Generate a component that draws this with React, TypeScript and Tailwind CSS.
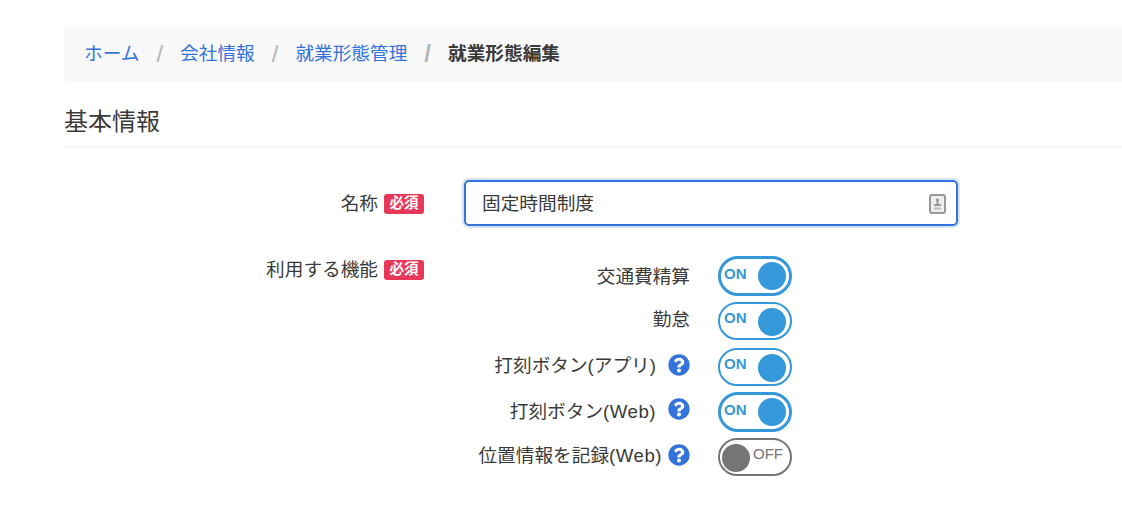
import { FaQuestionCircle } from "react-icons/fa";

const features = [
  { label: "交通費精算", latin: "", on: true, thick: true, help: false },
  { label: "勤怠", latin: "", on: true, thick: false, help: false },
  { label: "打刻ボタン(アプリ)", latin: "", on: true, thick: false, help: true },
  { label: "打刻ボタン", latin: "(Web)", on: true, thick: true, help: true },
  { label: "位置情報を記録", latin: "(Web)", on: false, thick: false, help: true },
];

function Required() {
  return (
    <span className="ml-[6px] flex h-5 w-10 items-center justify-center rounded-[3px] bg-[#e8385a] text-[14.5px] font-bold text-white">
      必須
    </span>
  );
}

function Slash({ bold }: { bold?: boolean }) {
  return <span className={`mx-[17px] text-2xl text-[#b5b5b5] ${bold ? "font-bold" : ""}`}>/</span>;
}

function Toggle({ on, thick }: { on: boolean; thick: boolean }) {
  if (!on) {
    return (
      <div className="relative h-[38px] w-[74px] rounded-full border-2 border-[#757575] bg-white">
        <span className="absolute left-[2px] top-[4px] h-7 w-7 rounded-full bg-[#757575]" />
        <span className="absolute left-[33px] top-[4px] text-[15px] leading-5 text-[#757575]">OFF</span>
      </div>
    );
  }
  return (
    <div className={`relative w-[74px] rounded-full bg-white border-[#3498db] ${thick ? "h-10 border-[3px]" : "h-[38px] border-2"}`}>
      <span className={`absolute h-7 w-7 rounded-full bg-[#3498db] ${thick ? "right-[3px] top-[3px]" : "right-[4px] top-[4px]"}`} />
      <span className={`absolute text-[15px] font-bold leading-5 text-[#3498db] ${thick ? "left-[3px] top-[5px]" : "left-[4px] top-[4px]"}`}>ON</span>
    </div>
  );
}

export default function App() {
  return (
    <div className="h-[516px] overflow-hidden bg-white pl-16 pt-[26px] font-['Liberation_Sans','Noto_Sans_CJK_JP',sans-serif] text-[18.67px] text-[#3a3a3a]">
      {/* Breadcrumb */}
      <nav className="flex h-14 items-center rounded-l-[5px] bg-[#f9f9f9] pl-5">
        <a className="text-[#3273dc]">ホーム</a>
        <Slash />
        <a className="text-[#3273dc]">会社情報</a>
        <Slash />
        <a className="text-[#3273dc]">就業形態管理</a>
        <Slash bold />
        <span className="font-bold">就業形態編集</span>
      </nav>

      {/* Section title */}
      <h2 className="mt-[21px] border-b-2 border-[#f5f5f5] pb-[6px] text-2xl leading-[37px]">基本情報</h2>

      <div className="mt-8 flex flex-col">
        <div className="flex items-center">
          <div className="mt-[2px] flex w-[360px] items-center justify-end">
            <span>名称</span>
            <Required />
          </div>
          <div className="ml-10 flex h-[46px] w-[494px] items-center justify-between rounded-[5px] border-2 border-[#3273dc] px-4 shadow-[0_0_0_2px_rgba(50,115,220,0.2)]">
            <span className="mt-[2px]">固定時間制度</span>
            <svg width="17" height="20" viewBox="0 0 17 20" className="-mr-[6px] mt-[2px]">
              <rect x="1" y="1" width="15" height="18" rx="2" fill="#eeeeee" stroke="#999999" strokeWidth="2" />
              <path d="M8.5 4.5a1.6 1.6 0 0 1 1 2.8V10H12v2H5v-2h2.500V7.300a1.600 1.600 0 0 1 1-2.800z" fill="#999999" />
              <rect x="5" y="13.500" width="7" height="2" fill="#bbbbbb" />
            </svg>
          </div>
        </div>

        <div className="mt-[30px] flex items-start">
          <div className="flex h-7 w-[360px] items-center justify-end">
            <span>利用する機能</span>
            <Required />
          </div>
          <div className="ml-10 flex w-[328px] flex-col gap-[6px]">
            {features.map((f, i) => (
              <div key={f.label} className={`flex items-center justify-end ${i === 2 ? "mt-[2px]" : ""}`}>
                <span className={`whitespace-nowrap ${labelOffset(i, f.thick)}`}>
                  {f.label}
                  {f.latin && <span className="tracking-[0.5px]">{f.latin}</span>}
                </span>
                {f.help && (
                  <FaQuestionCircle
                    className={`text-[22px] text-[#3273dc] ${i === 4 ? "ml-[6px]" : "ml-3"} ${i === 3 ? "-mt-[7px]" : "-mt-1"}`}
                  />
                )}
                <div className="ml-7">
                  <Toggle on={f.on} thick={f.thick} />
                </div>
              </div>
            ))}
          </div>
        </div>
      </div>
    </div>
  );
}

function labelOffset(i: number, thick: boolean) {
  if (i === 0) return "mt-[2px]";
  return thick ? "mt-0" : "-mt-[2px]";
}
